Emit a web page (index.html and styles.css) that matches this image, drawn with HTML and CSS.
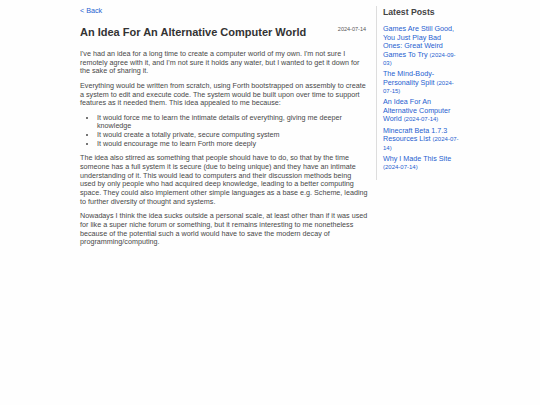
FILE: index.html
```html
<!DOCTYPE html>
<html>
<head>
<meta charset="utf-8">
<link rel="stylesheet" href="styles.css">
</head>
<body>
<div class="page">
  <main class="main">
    <a class="back" href="#">&lt; Back</a>
    <div class="title-row">
      <h1 class="title">An Idea For An Alternative Computer World</h1>
      <span class="date">2024-07-14</span>
    </div>
    <p>I've had an idea for a long time to create a computer world of my own. I'm not sure I remotely agree with it, and I'm not sure it holds any water, but I wanted to get it down for the sake of sharing it.</p>
    <p>Everything would be written from scratch, using Forth bootstrapped on assembly to create a system to edit and execute code. The system would be built upon over time to support features as it needed them. This idea appealed to me because:</p>
    <ul>
      <li>It would force me to learn the intimate details of everything, giving me deeper knowledge</li>
      <li>It would create a totally private, secure computing system</li>
      <li>It would encourage me to learn Forth more deeply</li>
    </ul>
    <p>The idea also stirred as something that people should have to do, so that by the time someone has a full system it is secure (due to being unique) and they have an intimate understanding of it. This would lead to computers and their discussion methods being used by only people who had acquired deep knowledge, leading to a better computing space. They could also implement other simple languages as a base e.g. Scheme, leading to further diversity of thought and systems.</p>
    <p>Nowadays I think the idea sucks outside a personal scale, at least other than if it was used for like a super niche forum or something, but it remains interesting to me nonetheless because of the potential such a world would have to save the modern decay of programming/computing.</p>
  </main>
  <aside class="sidebar">
    <h2 class="side-title">Latest Posts</h2>
    <ul class="posts">
      <li><a href="#">Games Are Still Good, You Just Play Bad Ones: Great Weird Games To Try <span class="pdate">(2024-09-03)</span></a></li>
      <li><a href="#">The Mind-Body-Personality Split <span class="pdate">(2024-07-15)</span></a></li>
      <li><a href="#">An Idea For An Alternative Computer World <span class="pdate">(2024-07-14)</span></a></li>
      <li><a href="#">Minecraft Beta 1.7.3 Resources List <span class="pdate">(2024-07-14)</span></a></li>
      <li><a href="#">Why I Made This Site <span class="pdate">(2024-07-14)</span></a></li>
    </ul>
  </aside>
</div>
</body>
</html>
```

FILE: styles.css
```css
html, body {
  margin: 0;
  padding: 0;
  background: #fefefe;
}
body {
  font-family: "Liberation Sans", Arial, sans-serif;
  color: #484848;
}
a {
  color: #1f5fd0;
  text-decoration: none;
}
.page {
  display: flex;
  width: 380px;
  margin: 0 auto;
  padding-top: 6px;
}
.main {
  width: 287.6px;
  flex: none;
  padding-right: 8.4px;
  font-size: 7.2px;
  line-height: 1.2;
}
.back {
  display: block;
  font-size: 7.2px;
  line-height: 10px;
}
.title-row {
  display: flex;
  justify-content: space-between;
  align-items: flex-start;
  margin-top: 9px;
}
.title {
  margin: 0;
  font-size: 11px;
  color: #333;
  line-height: 14px;
}
.date {
  font-size: 5.5px;
  color: #555;
  line-height: 8px;
  margin-right: 1.6px;
}
p {
  margin: 6px 0;
}
.title-row + p {
  margin-top: 11px;
}
ul {
  margin: 6px 0;
  padding-left: 17px;
}
.sidebar {
  align-self: flex-start;
  border-left: 1px solid #ddd;
  padding: 1px 0 8px 6px;
  width: 77px;
}
.side-title {
  margin: 0 0 7.5px;
  font-size: 8.7px;
  line-height: 10.5px;
  color: #444;
}
.posts {
  list-style: none;
  margin: 0;
  padding: 0;
  font-size: 7.2px;
  line-height: 8.5px;
}
.posts li {
  margin-bottom: 2.7px;
}
.posts li:last-child {
  margin-bottom: 0;
}
.pdate {
  font-size: 6px;
}
```
